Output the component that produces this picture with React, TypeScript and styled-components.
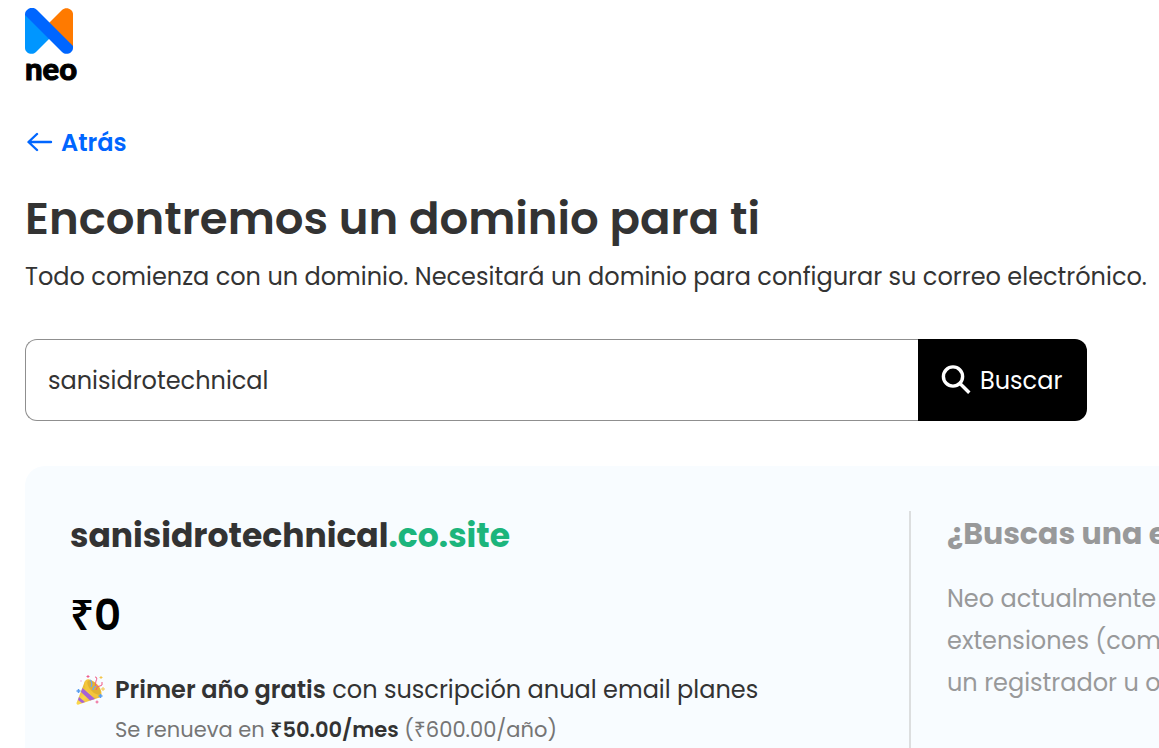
import React from 'react';
import styled, { createGlobalStyle } from 'styled-components';

const GlobalStyle = createGlobalStyle`
  *, *::before, *::after { box-sizing: border-box; }
  body {
    margin: 0;
    background: #fff;
    color: #333;
    font-family: Poppins, Inter, "Liberation Sans", sans-serif;
    overflow: hidden;
  }
  h1, h2, p { margin: 0; }
`;

const Page = styled.div`
  display: flex;
  flex-direction: column;
  height: 100vh;
  padding: 8px 0 0 25px;
`;

const Brand = styled.header`
  display: flex;
  flex-direction: column;
  align-items: flex-start;
  height: 112px;
`;

const BrandName = styled.span`
  color: #000;
  font-family: Lato, sans-serif;
  font-size: 31px;
  font-weight: 900;
  line-height: 28px;
  -webkit-text-stroke: 1px #000;
`;

const BackLink = styled.a`
  display: flex;
  align-items: center;
  align-self: flex-start;
  gap: 8px;
  height: 44px;
  padding-left: 2px;
  color: #0066ff;
  font-size: 24px;
  font-weight: 600;
  text-decoration: none;
`;

const Title = styled.h1`
  margin-top: 21px;
  color: #333;
  font-size: 45px;
  font-weight: 600;
  line-height: 68px;
  white-space: nowrap;
`;

const Lead = styled.p`
  margin-top: 5px;
  font-size: 24px;
  line-height: 38px;
  white-space: nowrap;
`;

const SearchForm = styled.form`
  display: flex;
  flex: none;
  height: 82px;
  margin: 43px 72px 45px 0;
`;

const SearchInput = styled.input`
  flex: 1;
  min-width: 0;
  padding: 0 22px;
  border: 1px solid #8f8f8f;
  border-right: 0;
  border-radius: 12px 0 0 12px;
  outline: 0;
  background: #fff;
  color: #333;
  font: inherit;
  font-size: 24px;
`;

const SearchButton = styled.button`
  display: flex;
  align-items: center;
  gap: 8px;
  width: 169px;
  padding: 0 22px;
  border: 0;
  border-radius: 0 12px 12px 0;
  background: #000;
  color: #fff;
  font: inherit;
  font-size: 24px;
`;

const Card = styled.section`
  display: flex;
  flex: 1;
  min-height: 0;
  padding: 45px 0 0 45px;
  border-radius: 20px 0 0 0;
  background: #f8fcff;
  overflow: hidden;
`;

const Offer = styled.div`
  flex: 1;
  min-width: 0;
  white-space: nowrap;
`;

const Domain = styled.h2`
  color: #333;
  font-size: 33px;
  font-weight: 700;
  line-height: 50px;
`;

const Extension = styled.span`
  color: #1cb57c;
`;

const Rupee = styled.span`
  font-family: "Open Sans", "Noto Sans", sans-serif;
  line-height: 1;
`;

const Price = styled.p`
  margin-top: 22px;
  color: #000;
  font-size: 42px;
  font-weight: 600;
  line-height: 66px;
`;

const Perk = styled.div`
  display: flex;
  align-items: flex-start;
  gap: 10px;
  margin-top: 20px;
  padding-left: 5px;
`;

const PerkTitle = styled.p`
  font-size: 24px;
  line-height: 42px;
`;

const PerkNote = styled.p`
  color: #757575;
  font-size: 21px;
  line-height: 38px;

  strong { color: #333; }
`;

const Strong = styled.strong`
  font-weight: 600;
`;

const Aside = styled.aside`
  flex: 0 0 250px;
  padding-left: 36px;
  border-left: 2px solid #dcdedf;
  color: #98999a;
  white-space: nowrap;
  overflow: hidden;
`;

const AsideTitle = styled.h2`
  font-size: 30px;
  font-weight: 700;
  line-height: 45px;
`;

const AsideText = styled.p`
  margin-top: 22px;
  font-size: 24px;
  line-height: 42px;
`;

const NeoMark = () => (
  <svg width="48" height="46" viewBox="0 0 48 46" aria-hidden="true">
    <path d="M0 6V40C0 45 7 48 11 44L30 25Z" fill="#0096ff" />
    <path d="M48 40V6C48 1 41-2 37 2L18 21Z" fill="#ff7a00" />
    <path d="M2 2C5-1 9-1 12 2L48 38V40C48 45 41 48 37 44L0 7C0 5 0 4 2 2Z" fill="#0066ff" />
  </svg>
);

const ArrowIcon = () => (
  <svg width="26" height="20" viewBox="0 0 26 20" fill="none" stroke="currentColor" strokeWidth="2.4" strokeLinecap="round" strokeLinejoin="round" aria-hidden="true">
    <path d="M24 10H2M10 2L1.5 10L10 18" />
  </svg>
);

const SearchIcon = () => (
  <svg width="32" height="32" viewBox="0 0 32 32" fill="none" stroke="currentColor" strokeWidth="3.4" aria-hidden="true">
    <circle cx="13" cy="12.5" r="9.6" />
    <path d="M19.5 19L29.3 28.8" />
  </svg>
);

const PartyIcon = () => (
  <svg width="30" height="40" viewBox="0 0 30 40" aria-hidden="true">
    <defs>
      <linearGradient id="cone" x1="0" y1="0" x2="1" y2="1">
        <stop offset="0" stopColor="#d99c1c" />
        <stop offset=".5" stopColor="#fbd84c" />
        <stop offset="1" stopColor="#dda027" />
      </linearGradient>
    </defs>
    <path d="M10 12L1.5 34C1.5 36 3 36 5 35L26 28Z" fill="url(#cone)" />
    <path d="M7.5 19L20 30L15 31.5L6 23Z" fill="#a663d8" />
    <path d="M4 28L10 33L7 34L3 31Z" fill="#a663d8" />
    <ellipse cx="18" cy="19.5" rx="11" ry="6" transform="rotate(48 18 19.5)" fill="#f4c63c" />
    <ellipse cx="19" cy="18.5" rx="9" ry="4" transform="rotate(48 19 18.5)" fill="#e2b232" />
    <path d="M15 11Q18 13 16 18M21 17Q18 18 18 21" fill="none" stroke="#6fa6ef" strokeWidth="1.3" />
    <path d="M20 8Q23 8 21 12Q20 15 21 17M21 21Q22 16 25 17Q28 17 27 13" fill="none" stroke="#ef5986" strokeWidth="1" />
    <path d="M13 6V9M11.5 7.5H14.5M22 31.5V34.5M20.5 33H23.5" stroke="#ee5f90" strokeWidth="1" />
    <path d="M3.5 20V24M1.5 22H5.5M25.5 25V29M23.5 27H27.5" stroke="#579cf0" strokeWidth="1.5" />
    <path d="M26 7V10M24.5 8.5H27.5M28 18V22M26 20H30" stroke="#f4c64c" strokeWidth="1" />
    <circle cx="6" cy="12" r="0.8" fill="#e9a4d7" />
  </svg>
);

export default function App() {
  return (
    <>
      <GlobalStyle />
      <Page>
        <Brand>
          <NeoMark />
          <BrandName>neo</BrandName>
        </Brand>
        <BackLink href="#"><ArrowIcon />Atrás</BackLink>
        <Title>Encontremos un dominio para ti</Title>
        <Lead>Todo comienza con un dominio. Necesitará un dominio para configurar su correo electrónico.</Lead>
        <SearchForm role="search" onSubmit={(event) => event.preventDefault()}>
          <SearchInput type="text" aria-label="Dominio" defaultValue="sanisidrotechnical" />
          <SearchButton type="submit"><SearchIcon />Buscar</SearchButton>
        </SearchForm>
        <Card>
          <Offer>
            <Domain>sanisidrotechnical<Extension>.co.site</Extension></Domain>
            <Price><Rupee>₹</Rupee>0</Price>
            <Perk>
              <PartyIcon />
              <div>
                <PerkTitle><Strong>Primer año gratis</Strong> con suscripción anual email planes</PerkTitle>
                <PerkNote>Se renueva en <Strong><Rupee>₹</Rupee>50.00/mes</Strong> (<Rupee>₹</Rupee>600.00/año)</PerkNote>
              </div>
            </Perk>
          </Offer>
          <Aside>
            <AsideTitle>¿Buscas una e</AsideTitle>
            <AsideText>
              Neo actualmente<br />
              extensiones (com<br />
              un registrador u o
            </AsideText>
          </Aside>
        </Card>
      </Page>
    </>
  );
}
